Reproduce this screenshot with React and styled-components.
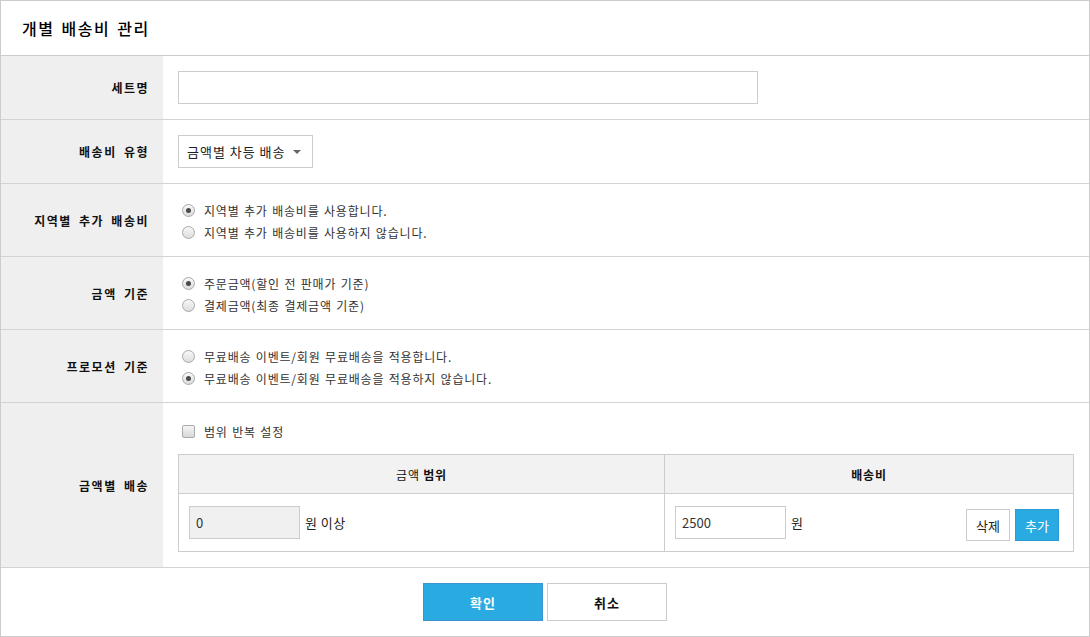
import React, { useState } from "react";
import styled, { createGlobalStyle, css } from "styled-components";

const GlobalStyle = createGlobalStyle`
  * { box-sizing: border-box; }
  body {
    margin: 0;
    background: #fff;
    font-family: "Noto Sans CJK KR", "Noto Sans", sans-serif;
    color: #333;
  }
`;

function App() {
  const [region, setRegion] = useState(0);
  const [basis, setBasis] = useState(0);
  const [promo, setPromo] = useState(1);
  const [repeat, setRepeat] = useState(false);

  return (
    <>
      <GlobalStyle />
      <Panel>
        <Header>개별 배송비 관리</Header>

        <Row height={64}>
          <Label>세트명</Label>
          <Cell>
            <TextInput width={580} />
          </Cell>
        </Row>

        <Row height={64}>
          <Label>배송비 유형</Label>
          <Cell>
            <Select>
              금액별 차등 배송
              <Caret />
            </Select>
          </Cell>
        </Row>

        <Row height={73}>
          <Label>지역별 추가 배송비</Label>
          <Cell column>
            <Option onClick={() => setRegion(0)}>
              <Radio checked={region === 0} />
              지역별 추가 배송비를 사용합니다.
            </Option>
            <Option onClick={() => setRegion(1)}>
              <Radio checked={region === 1} />
              지역별 추가 배송비를 사용하지 않습니다.
            </Option>
          </Cell>
        </Row>

        <Row height={73}>
          <Label>금액 기준</Label>
          <Cell column>
            <Option onClick={() => setBasis(0)}>
              <Radio checked={basis === 0} />
              주문금액(할인 전 판매가 기준)
            </Option>
            <Option onClick={() => setBasis(1)}>
              <Radio checked={basis === 1} />
              결제금액(최종 결제금액 기준)
            </Option>
          </Cell>
        </Row>

        <Row height={73}>
          <Label>프로모션 기준</Label>
          <Cell column>
            <Option onClick={() => setPromo(0)}>
              <Radio checked={promo === 0} />
              무료배송 이벤트/회원 무료배송을 적용합니다.
            </Option>
            <Option onClick={() => setPromo(1)}>
              <Radio checked={promo === 1} />
              무료배송 이벤트/회원 무료배송을 적용하지 않습니다.
            </Option>
          </Cell>
        </Row>

        <Row height={165}>
          <Label>금액별 배송</Label>
          <RangeCell>
            <Option onClick={() => setRepeat(!repeat)}>
              <Checkbox checked={repeat} />
              범위 반복 설정
            </Option>
            <FeeTable>
              <thead>
                <tr>
                  <Th style={{ width: 486 }}>
                    금액 <b>범위</b>
                  </Th>
                  <Th>배송비</Th>
                </tr>
              </thead>
              <tbody>
                <tr>
                  <Td>
                    <Inline>
                      <TextInput width={111} disabled value="0" readOnly />
                      <Unit>원 이상</Unit>
                    </Inline>
                  </Td>
                  <Td>
                    <Inline>
                      <TextInput width={111} defaultValue="2500" />
                      <Unit>원</Unit>
                      <Actions>
                        <SmallButton>삭제</SmallButton>
                        <SmallButton primary>추가</SmallButton>
                      </Actions>
                    </Inline>
                  </Td>
                </tr>
              </tbody>
            </FeeTable>
          </RangeCell>
        </Row>

        <Footer>
          <BigButton primary>확인</BigButton>
          <BigButton>취소</BigButton>
        </Footer>
      </Panel>
    </>
  );
}

export default App;

const Panel = styled.div`
  width: 1090px;
  height: 637px;
  border: 1px solid #cccccc;
  display: flex;
  flex-direction: column;
  font-size: 12px;
`;

const Header = styled.div`
  height: 55px;
  flex: none;
  border-bottom: 1px solid #cccccc;
  display: flex;
  align-items: center;
  padding-left: 21px;
  font-size: 16px;
  font-weight: 500;
  color: #000;
  letter-spacing: 1.5px;
  word-spacing: 2px;
`;

const Row = styled.div`
  display: flex;
  height: ${(p) => p.height}px;
  flex: none;
  border-bottom: 1px solid #d3d3d3;
`;

const Label = styled.div`
  width: 162px;
  flex: none;
  background: #efefef;
  display: flex;
  align-items: center;
  justify-content: flex-end;
  padding-right: 14px;
  font-weight: bold;
  font-size: 12px;
  color: #111;
  letter-spacing: 1.5px;
  word-spacing: 3px;
`;

const Cell = styled.div`
  flex: 1;
  display: flex;
  padding: 0 15px;
  align-items: center;
  ${(p) =>
    p.column &&
    css`
      flex-direction: column;
      align-items: flex-start;
      justify-content: center;
      padding-left: 20px;
      padding-top: 3px;
    `}
`;

const RangeCell = styled.div`
  flex: 1;
  display: flex;
  flex-direction: column;
  padding: 17px 16px 0 15px;
  gap: 12px;
`;

const TextInput = styled.input`
  width: ${(p) => p.width}px;
  height: 33px;
  border: 1px solid #cccccc;
  background: ${(p) => (p.disabled ? "#f0f0f0" : "#fff")};
  font-family: inherit;
  font-size: 13px;
  color: #333;
  padding: 0 6px;
  outline: none;
`;

const Select = styled.div`
  height: 33px;
  width: 135px;
  border: 1px solid #cccccc;
  display: flex;
  align-items: center;
  padding: 0 11px 0 8px;
  justify-content: space-between;
  font-size: 13px;
  letter-spacing: 1px;
  color: #222;
`;

const Caret = styled.span`
  width: 0;
  height: 0;
  border-left: 4px solid transparent;
  border-right: 4px solid transparent;
  border-top: 4px solid #666;
  margin-top: 1px;
`;

const Option = styled.label`
  display: flex;
  align-items: center;
  height: 22px;
  gap: 9px;
  color: #333;
  cursor: pointer;
  letter-spacing: 0.8px;
  word-spacing: 1px;
`;

const Radio = styled.span`
  width: 13px;
  height: 13px;
  margin-left: -1px;
  border-radius: 50%;
  border: 1px solid #a9a9a9;
  background: linear-gradient(#f8f8f8, #dcdcdc);
  display: flex;
  align-items: center;
  justify-content: center;
  flex: none;
  &::after {
    content: "";
    width: 5px;
    height: 5px;
    border-radius: 50%;
    background: ${(p) => (p.checked ? "#4a4a4a" : "transparent")};
  }
`;

const Checkbox = styled.span`
  width: 13px;
  height: 13px;
  margin-left: 4px;
  border-radius: 2px;
  border: 1px solid #a9a9a9;
  background: linear-gradient(#f6f6f6, #d8d8d8);
  flex: none;
`;

const FeeTable = styled.table`
  width: 896px;
  border-collapse: collapse;
  border: 1px solid #cccccc;
`;

const Th = styled.th`
  height: 39px;
  background: #f2f2f2;
  border: 1px solid #cccccc;
  font-size: 12px;
  font-weight: normal;
  color: #111;
  letter-spacing: 0.8px;
  & b,
  &:last-child {
    font-weight: bold;
  }
`;

const Td = styled.td`
  border: 1px solid #cccccc;
  height: 58px;
  padding: 0 14px 0 10px;
  vertical-align: middle;
`;

const Inline = styled.div`
  display: flex;
  align-items: center;
  gap: 5px;
`;

const Unit = styled.span`
  font-size: 13px;
  color: #222;
  letter-spacing: 0.5px;
`;

const Actions = styled.div`
  margin-left: auto;
  display: flex;
  gap: 5px;
  margin-top: 5px;
`;

const SmallButton = styled.button`
  height: 32px;
  padding: 0;
  width: 44px;
  font-family: inherit;
  font-size: 13px;
  border: 1px solid ${(p) => (p.primary ? "#2a9ad8" : "#cccccc")};
  background: ${(p) => (p.primary ? "#29abe2" : "#fff")};
  color: ${(p) => (p.primary ? "#fff" : "#222")};
`;

const Footer = styled.div`
  flex: 1;
  display: flex;
  justify-content: center;
  align-items: center;
  gap: 4px;
`;

const BigButton = styled.button`
  width: 120px;
  height: 38px;
  font-family: inherit;
  font-size: 13px;
  font-weight: bold;
  letter-spacing: 1px;
  border: 1px solid ${(p) => (p.primary ? "#3b95d2" : "#cccccc")};
  background: ${(p) => (p.primary ? "#29abe2" : "#fff")};
  color: ${(p) => (p.primary ? "#fff" : "#111")};
`;
